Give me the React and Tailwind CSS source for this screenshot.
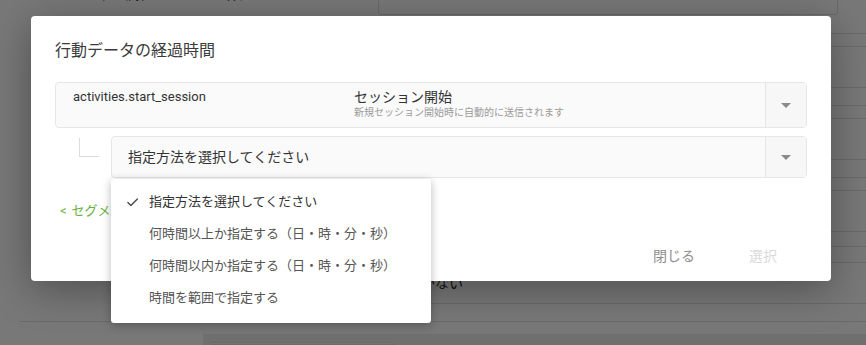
import React from 'react';

const FONT = 'font-["Roboto","Noto_Sans_CJK_JP",sans-serif]';

// options shown in the open dropdown
const OPTIONS = [
  { label: '指定方法を選択してください', checked: true },
  { label: '何時間以上か指定する（日・時・分・秒）' },
  { label: '何時間以内か指定する（日・時・分・秒）' },
  { label: '時間を範囲で指定する' },
];

function Arrow() {
  return (
    <div className="w-[41px] self-stretch flex items-center justify-center border-l border-[#e6e6e6] bg-[#f7f7f7]">
      <div className="w-0 h-0 border-x-[5px] border-x-transparent border-t-[5px] border-t-[#8a8a8a]" />
    </div>
  );
}

function CheckMark() {
  return (
    <svg width="13" height="13" viewBox="0 0 24 24" fill="none" stroke="#444" strokeWidth="2.4" strokeLinecap="round" strokeLinejoin="round">
      <path d="M21 5.5 9 17.5l-5.5-5.5" />
    </svg>
  );
}

// the page under the modal, drawn in its own colours and dimmed by the overlay
function BackgroundPage() {
  return (
    <div className="flex flex-col w-full h-full bg-white">
      <div className="flex h-[321px]">
        <div className="w-[360px] flex flex-col">
          <div className="flex -mt-[15px] text-[14px] leading-[18px] text-[#222]">
            <span className="ml-[70px]">ユーザー属性</span>
            <span className="ml-[54px]">一致する</span>
          </div>
        </div>
        <div className="flex-1 flex flex-col">
          <div className="h-[34px] border-b border-[#e2e2e2] flex">
            <div className="ml-[18px] w-[460px] h-[15px] border border-t-0 border-[#e2e2e2] rounded-b-[3px]" />
          </div>
          <div className="h-[13px] border-b border-[#e2e2e2]" />
          <div className="h-[41px] border-b border-[#e2e2e2]" />
          <div className="h-[18px] border-b border-[#e2e2e2]" />
          <div className="h-[13px] border-b border-[#e2e2e2]" />
          <div className="h-[41px] border-b border-[#e2e2e2]" />
          <div className="h-[18px] border-b border-[#e2e2e2]" />
          <div className="h-[13px] border-b border-[#e2e2e2]" />
          <div className="h-[41px] border-b border-[#e2e2e2]" />
          <div className="h-[15px] border-b border-[#e2e2e2]" />
          <div className="h-[16px] border-b border-[#e2e2e2]" />
          <div className="h-[41px] border-b border-[#e2e2e2] pl-[19px] pt-[11px] text-[14px] leading-[18px] text-[#222]">
            データがない
          </div>
          <div className="flex-1" />
        </div>
      </div>
      <div className="ml-[19px] h-px bg-[#e2e2e2]" />
      <div className="flex flex-1 mt-[12px]">
        <div className="w-[203px]" />
        <div className="flex-1 bg-[#ececec] pl-[8px] pt-[8px]">
          <div className="w-[184px] h-full bg-[#f6f6f6] border border-[#e4e4e4]" />
        </div>
      </div>
    </div>
  );
}

function Dialog() {
  return (
    <div className="absolute left-[31px] top-[16px] w-[800px] h-[265px] bg-white rounded-[4px] shadow-[0_8px_40px_rgba(0,0,0,0.35)] px-[24px] pt-[24px] flex flex-col">
      <h2 className="text-[16px] leading-[22px] text-[#3a3a3a] font-normal">行動データの経過時間</h2>

      {/* event select */}
      <div className="mt-[20px] h-[46px] flex bg-[#fafafa] border border-[#e6e6e6] rounded-[4px]">
        <div className="flex-1 flex pl-[17px] pt-[5px]">
          <div className="w-[281px] text-[13px] leading-[18px] text-[#333]">activities.start_session</div>
          <div className="flex flex-col">
            <span className="text-[14px] leading-[18px] text-[#333]">セッション開始</span>
            <span className="text-[10px] leading-[14px] text-[#9a9a9a]">新規セッション開始時に自動的に送信されます</span>
          </div>
        </div>
        <Arrow />
      </div>

      {/* method select with tree connector */}
      <div className="mt-[8px] flex">
        <div className="ml-[24px] mt-[2px] w-[20px] h-[19px] border-l border-b border-[#dcdcdc]" />
        <div className="relative ml-[12px] flex-1">
          <div className="h-[42px] flex items-center bg-[#fafafa] border border-[#e6e6e6] rounded-[4px]">
            <span className="flex-1 pl-[16px] text-[14px] text-[#333]">指定方法を選択してください</span>
            <Arrow />
          </div>

          {/* open dropdown */}
          <ul className="absolute left-0 top-full mt-px w-[320px] bg-white rounded-[3px] shadow-[0_2px_10px_rgba(0,0,0,0.28)] pt-[7px] pb-[9px] z-10">
            {OPTIONS.map(o => (
              <li key={o.label} className="h-[32px] flex items-center pl-[15px]">
                <span className="w-[23px] flex">{o.checked && <CheckMark />}</span>
                <span className={`text-[13px] ${o.checked ? 'text-[#333]' : 'text-[#555]'}`}>{o.label}</span>
              </li>
            ))}
          </ul>
        </div>
      </div>

      <div className="mt-[24px] text-[13px] leading-[18px] text-[#66b23a] pl-[5px]">
        <span className="mr-[5px]">&lt;</span>セグメントに戻る
      </div>

      <div className="mt-[26px] flex justify-end gap-[54px] pr-[30px] text-[14px] leading-[20px]">
        <button className="text-[#8e8e8e]">閉じる</button>
        <button className="text-[#dadada]">選択</button>
      </div>
    </div>
  );
}

export default function App() {
  return (
    <div className={`relative w-[866px] h-[345px] overflow-hidden ${FONT}`}>
      <BackgroundPage />
      <div className="absolute inset-0 bg-black/[0.53]" />
      <Dialog />
    </div>
  );
}
